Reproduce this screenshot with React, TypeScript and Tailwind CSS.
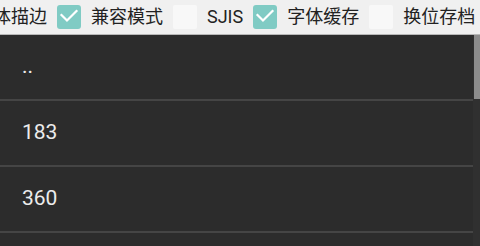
import React from "react";

function Checked() {
  return (
    <div className="w-[24px] h-[24px] shrink-0 rounded-[3px] bg-[#80cbc4] flex items-center justify-center">
      <svg width="24" height="24" viewBox="0 0 24 24" fill="none">
        <polyline points="4.5,10 10,15.5 19.5,6" stroke="#ffffff" strokeWidth="2.2" strokeLinecap="square" />
      </svg>
    </div>
  );
}

function Unchecked() {
  return <div className="w-[24px] h-[24px] shrink-0 rounded-[2px] bg-[#f8f8f8]" />;
}

const rows = ["..", "183", "360", ""];

export default function App() {
  return (
    <div className="w-[480px] h-[246px] overflow-hidden flex flex-col bg-[#2c2c2c]" style={{ fontFamily: "Roboto, 'Noto Sans CJK SC', sans-serif" }}>
      <div className="h-[35px] shrink-0 bg-[#f0f0f0] border-b border-[#b8b8b8] overflow-hidden">
        <div className="h-full flex items-center gap-[10px] ml-[-7px] whitespace-nowrap text-[18px] text-[#222222] leading-none">
          <span>体描边</span>
          <Checked />
          <span>兼容模式</span>
          <Unchecked />
          <span>SJIS</span>
          <Checked />
          <span>字体缓存</span>
          <Unchecked />
          <span>换位存档</span>
          <Unchecked />
        </div>
      </div>
      <div className="relative flex-1 overflow-hidden">
        <div className="flex flex-col">
          {rows.map((r, i) => (
            <div key={i} className="h-[66px] shrink-0 border-b-2 border-[#454545] flex items-center pl-[22px] text-[21px] text-[#ececec]">
              {r}
            </div>
          ))}
        </div>
        <div className="absolute right-0 top-0 bottom-0 w-[7px] bg-[#303030]" />
        <div className="absolute right-0 top-0 w-[6px] h-[64px] bg-[#8c8c8c]" />
      </div>
    </div>
  );
}
